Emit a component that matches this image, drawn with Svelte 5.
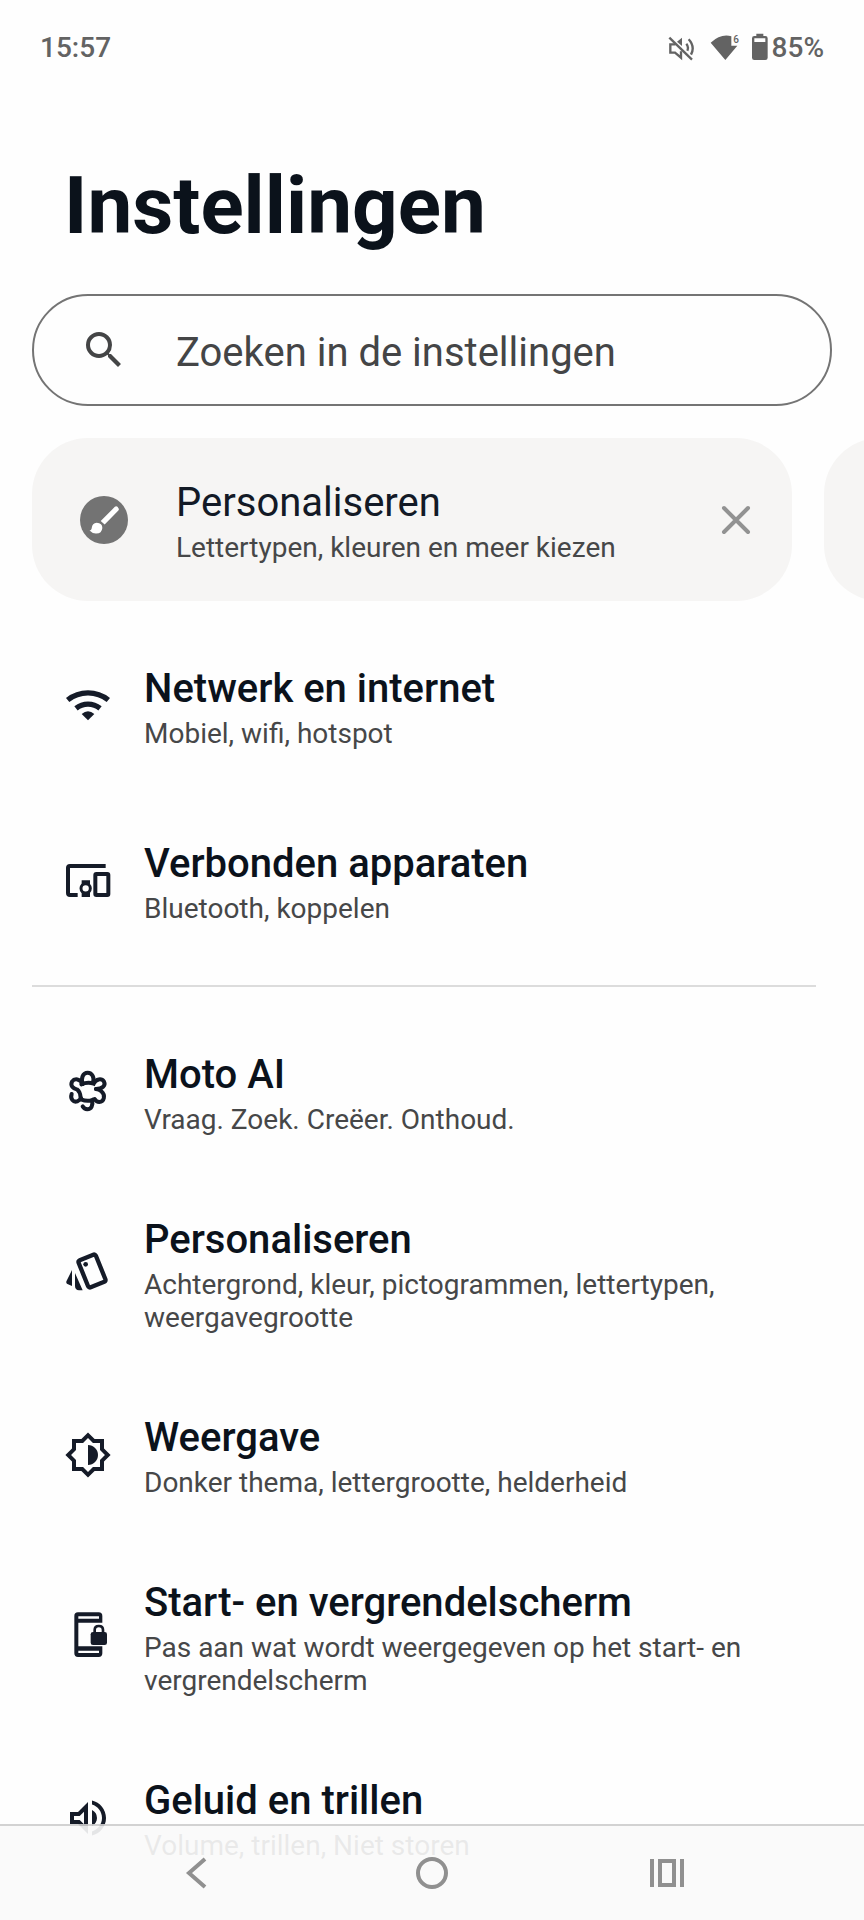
<!--
  Phone settings home: status bar, search, suggestion carousel,
  grouped settings list and the system navigation bar on top.
-->
<script lang="ts">
	type IconName = 'wifi' | 'devices' | 'assistant' | 'style' | 'display' | 'lock' | 'sound';

	type Setting = {
		icon: IconName;
		title: string;
		summary: string;
	};

	const connectivity: Setting[] = [
		{ icon: 'wifi', title: 'Netwerk en internet', summary: 'Mobiel, wifi, hotspot' },
		{ icon: 'devices', title: 'Verbonden apparaten', summary: 'Bluetooth, koppelen' },
	];

	const device: Setting[] = [
		{ icon: 'assistant', title: 'Moto AI', summary: 'Vraag. Zoek. Creëer. Onthoud.' },
		{
			icon: 'style',
			title: 'Personaliseren',
			summary: 'Achtergrond, kleur, pictogrammen, lettertypen, weergavegrootte',
		},
		{ icon: 'display', title: 'Weergave', summary: 'Donker thema, lettergrootte, helderheid' },
		{
			icon: 'lock',
			title: 'Start- en vergrendelscherm',
			summary: 'Pas aan wat wordt weergegeven op het start- en vergrendelscherm',
		},
		{ icon: 'sound', title: 'Geluid en trillen', summary: 'Volume, trillen, Niet storen' },
	];

	let query = $state('');
	let showSuggestion = $state(true);
</script>

{#snippet settingIcon(name: IconName)}
	{#if name === 'wifi'}
		<svg class="icon" viewBox="42 39 144 144" aria-hidden="true">
			<path class="line" stroke-width="16" d="M53 93A98 98 0 0 1 175 93M78 118A58 58 0 0 1 150 118" />
			<path d="M95 135Q114 119 133 135L114 154Z" />
		</svg>
	{:else if name === 'devices'}
		<svg class="icon" viewBox="42 562 144 144" aria-hidden="true">
			<path class="line" stroke-width="12" d="M167 589H60Q54 589 54 595V670Q54 676 60 676H83" />
			<rect class="line" stroke-width="12" x="136" y="613" width="39" height="63" rx="3" />
			<circle class="line" stroke-width="9" cx="107" cy="656" r="14" />
			<path d="M95 632H120V645H95ZM95 667H120V682H95Z" />
		</svg>
	{:else if name === 'assistant'}
		<svg class="icon" viewBox="42 54 144 144" aria-hidden="true">
			<g class="line" stroke-width="12" stroke-linecap="round">
				<path d="M98 102C92 84 99 68 113 68S134 84 129 99" />
				<path d="M94 103Q113 95 131 101C138 86 155 84 162 95C168 107 157 117 138 117" />
				<path d="M138 117Q147 118 154 124C168 136 162 156 148 156Q139 156 134 147" />
				<path d="M93 148Q112 156 126 150C130 166 124 178 112 178Q103 177 98 169" />
				<path d="M98 102C90 86 74 84 66 95C60 107 69 116 82 119C91 126 91 136 92 144" />
				<path d="M65 132C60 147 70 158 82 154Q90 151 93 144" />
			</g>
		</svg>
	{:else if name === 'style'}
		<svg class="icon" viewBox="42 62 144 144" aria-hidden="true">
			<rect
				class="line"
				stroke-width="13"
				x="-28"
				y="-44"
				width="56"
				height="88"
				rx="6"
				transform="translate(126 128) rotate(-22)"
			/>
			<circle cx="107" cy="108" r="7" />
			<path d="M66 125V173L54 168Q46 164 50 157ZM75 134L98 186H87Q75 185 75 173Z" />
		</svg>
	{:else if name === 'display'}
		<svg class="icon" viewBox="0 0 24 24" aria-hidden="true">
			<path
				fill-rule="evenodd"
				d="M20 8.69V4h-4.69L12 .69 8.69 4H4v4.69L.69 12 4 15.31V20h4.69L12 23.31 15.31 20H20v-4.69L23.31 12 20 8.69zm-2 5.79V18h-3.52L12 20.48 9.52 18H6v-3.52L3.52 12 6 9.52V6h3.52L12 3.52 14.48 6H18v3.52L20.48 12 18 14.48z"
			/>
			<path d="M12 7v10c2.76 0 5-2.24 5-5s-2.24-5-5-5z" />
		</svg>
	{:else if name === 'lock'}
		<svg class="icon" viewBox="42 67 144 144" aria-hidden="true">
			<path
				fill-rule="evenodd"
				d="M84 68H146Q157 68 157 79V99H85V170H157V191Q157 202 146 202H84Q73 202 73 191V79Q73 68 84 68ZM85 80V87H147V80ZM85 183V190H147V183Z"
			/>
			<rect x="122" y="127" width="49" height="39" rx="7" />
			<path class="line" stroke-width="8" d="M134 129V121Q134 109 146.500 109T159 121V129" />
		</svg>
	{:else}
		<svg class="icon" viewBox="0 0 24 24" aria-hidden="true">
			<path
				d="M3 9v6h4l5 5V4L7 9H3zm7-.17v6.34L7.83 13H5v-2h2.83L10 8.83zM16.500 12A4.500 4.500 0 0 0 14 7.970v8.050c1.480-.73 2.500-2.250 2.500-4.020zM14 3.230v2.060c2.890.86 5 3.540 5 6.710s-2.110 5.850-5 6.710v2.060c4.010-.91 7-4.490 7-8.770s-2.990-7.860-7-8.770z"
			/>
		</svg>
	{/if}
{/snippet}

{#snippet settingList(items: Setting[])}
	{#each items as item (item.title)}
		<li>
			<a class="setting" href="#{item.icon}">
				{@render settingIcon(item.icon)}
				<span class="text">
					<span class="title">{item.title}</span>
					<span class="summary">{item.summary}</span>
				</span>
			</a>
		</li>
	{/each}
{/snippet}

<div class="screen">
	<header class="status-bar">
		<span>15:57</span>
		<div class="status-icons">
			<svg class="mute" viewBox="83 39 84 84" aria-hidden="true">
				<g class="line" stroke-width="7">
					<path d="M87 53L155 119" />
					<path d="M98 73H90V98H104L122 113V94M90 73H105" />
					<path d="M138 71Q146 81 141 92M145 58Q165 80 152 104" />
				</g>
				<path d="M110 65L125 53V78Z" />
			</svg>
			<svg class="signal" viewBox="209 39 90 84" aria-hidden="true">
				<path d="M211 68Q242 40 273 49V77H291L255 120Z" />
				<text x="279" y="70">6</text>
			</svg>
			<svg class="battery" viewBox="336 42 48 84" aria-hidden="true">
				<path
					fill-rule="evenodd"
					d="M349 44H370V51H376Q383 51 383 58V116Q383 123 376 123H343Q336 123 336 116V58Q336 51 343 51H349ZM343 58V69H376V58Z"
				/>
			</svg>
			<span>85%</span>
		</div>
	</header>

	<main>
		<h1>Instellingen</h1>

		<label class="search">
			<svg class="icon" viewBox="0 0 24 24" aria-hidden="true">
				<path
					d="M15.500 14h-.79l-.28-.27A6.471 6.471 0 0 0 16 9.500 6.500 6.500 0 1 0 9.500 16c1.610 0 3.090-.59 4.230-1.570l.27.28v.79l5 4.990L20.490 19l-4.990-5zm-6 0C7.010 14 5 11.990 5 9.500S7.010 5 9.500 5 14 7.010 14 9.500 11.990 14 9.500 14z"
				/>
			</svg>
			<input
				type="text"
				bind:value={query}
				placeholder="Zoeken in de instellingen"
				aria-label="Zoeken in de instellingen"
			/>
		</label>

		<div class="suggestions">
			{#if showSuggestion}
				<section class="card">
					<a class="card-link" href="#style">
						<svg class="icon" viewBox="177 646 146 146" aria-hidden="true">
							<circle cx="250" cy="719" r="73" />
							<g class="brush">
								<path d="M240 722L283 679Q287 676 291 679L294 683Q297 687 293 691L252 733Z" />
								<path d="M228 727Q245 728 245 743Q243 761 225 760Q213 759 206 751Q212 751 213 742Q214 728 228 727Z" />
							</g>
						</svg>
						<span class="text">
							<span class="title">Personaliseren</span>
							<span class="summary">Lettertypen, kleuren en meer kiezen</span>
						</span>
					</a>
					<button
						type="button"
						class="close"
						aria-label="Sluiten"
						onclick={() => (showSuggestion = false)}
					>
						<svg class="icon" viewBox="0 0 48 48" aria-hidden="true">
							<path class="line" stroke-width="4" stroke-linecap="round" d="M12 12L36 36M36 12L12 36" />
						</svg>
					</button>
				</section>
			{/if}
			<section class="card" aria-hidden="true"></section>
		</div>

		<ul class="group spaced">
			{@render settingList(connectivity)}
		</ul>
		<hr />
		<ul class="group">
			{@render settingList(device)}
		</ul>
	</main>

	<nav class="nav-bar">
		<button type="button" aria-label="Terug">
			<svg class="icon" viewBox="0 0 48 48" aria-hidden="true">
				<path class="line" stroke-width="4" d="M33 10L17 24L33 38" />
			</svg>
		</button>
		<button type="button" aria-label="Startscherm">
			<svg class="icon" viewBox="0 0 48 48" aria-hidden="true">
				<circle class="line" stroke-width="4" cx="24" cy="24" r="14" />
			</svg>
		</button>
		<button type="button" aria-label="Recente apps">
			<svg class="icon" viewBox="1 0 48 48" aria-hidden="true">
				<path class="line" stroke-width="4" d="M9 10V38M39 10V38M17 12H31V36H17Z" />
			</svg>
		</button>
	</nav>
</div>

<style>
	:global(body) {
		background: #fefefe;
	}

	.screen {
		height: 100vh;
		display: flex;
		flex-direction: column;
		overflow: hidden;
		background: #fefefe;
		color: #0b121b;
		font-family: Roboto, 'Noto Sans', sans-serif;
	}

	svg {
		display: block;
		flex-shrink: 0;
		fill: currentColor;
	}

	.icon {
		width: 48px;
		height: 48px;
	}

	.line {
		fill: none;
		stroke: currentColor;
	}

	.status-bar {
		flex-shrink: 0;
		display: flex;
		align-items: center;
		justify-content: space-between;
		height: 94px;
		padding-inline: 40px;
		color: #636363;
		font-size: 28px;
		font-weight: 500;
	}

	.status-icons {
		display: flex;
		align-items: center;
	}

	.mute {
		width: 28px;
		height: 28px;
		margin-right: 14px;
	}

	.signal {
		width: 30px;
		height: 28px;
		margin-right: 12px;
	}

	.signal text {
		font-size: 30px;
		font-weight: 500;
	}

	.battery {
		width: 16px;
		height: 28px;
		margin-right: 4px;
	}

	main {
		flex: 1;
		min-height: 0;
		overflow-y: auto;
		scrollbar-width: none;
	}

	h1 {
		margin: 65px 64px 41px;
		font-size: 80px;
		font-weight: 700;
		line-height: 94px;
	}

	.search {
		display: flex;
		align-items: center;
		gap: 48px;
		box-sizing: border-box;
		height: 112px;
		margin-inline: 32px;
		padding-inline: 46px;
		border: 2px solid #747474;
		border-radius: 56px;
		color: #444546;
	}

	.search input {
		flex: 1;
		min-width: 0;
		padding: 4px 0 0;
		border: 0;
		outline: none;
		background: none;
		color: inherit;
		font: inherit;
		font-size: 40px;
	}

	.search input::placeholder {
		color: inherit;
		opacity: 1;
	}

	.suggestions {
		display: flex;
		gap: 32px;
		margin-top: 32px;
		padding-left: 32px;
		overflow: hidden;
	}

	.card {
		flex: 0 0 calc(100% - 72px);
		display: flex;
		align-items: center;
		box-sizing: border-box;
		padding: 37px 32px 37px 48px;
		border-radius: 56px;
		background: #f6f5f4;
	}

	.card-link {
		flex: 1;
		display: flex;
		align-items: center;
		gap: 48px;
		color: #131a26;
		text-decoration: none;
	}

	.card-link .icon {
		color: #737373;
	}

	.card-link .title {
		font-weight: 400;
	}

	.brush {
		fill: #fff;
	}

	button {
		padding: 0;
		border: 0;
		background: none;
		cursor: pointer;
	}

	.close {
		color: #929292;
	}

	.text {
		display: flex;
		flex-direction: column;
		gap: 5px;
		padding-top: 4px;
	}

	.title {
		font-size: 40px;
		font-weight: 500;
		line-height: 47px;
	}

	.summary {
		color: #464748;
		font-size: 28px;
		line-height: 33px;
	}

	.group {
		display: flex;
		flex-direction: column;
		margin: 24px 0 0;
		padding: 0;
		list-style: none;
	}

	.spaced {
		gap: 10px;
	}

	.setting {
		display: flex;
		align-items: center;
		gap: 32px;
		padding: 36px 64px 40px;
		color: inherit;
		text-decoration: none;
	}

	.setting .icon {
		color: #151b28;
	}

	hr {
		height: 2px;
		margin: 20px 48px 0 32px;
		border: 0;
		background: #dcdcdc;
	}

	.nav-bar {
		position: fixed;
		inset: auto 0 0;
		display: grid;
		grid-template-columns: repeat(3, 1fr);
		box-sizing: border-box;
		height: 96px;
		padding-inline: 9%;
		border-top: 2px solid rgb(205 205 205 / 0.9);
		background: rgb(250 250 250 / 0.91);
		background-clip: padding-box;
		color: #909090;
	}

	.nav-bar button {
		display: grid;
		place-items: center;
		color: inherit;
	}
</style>
